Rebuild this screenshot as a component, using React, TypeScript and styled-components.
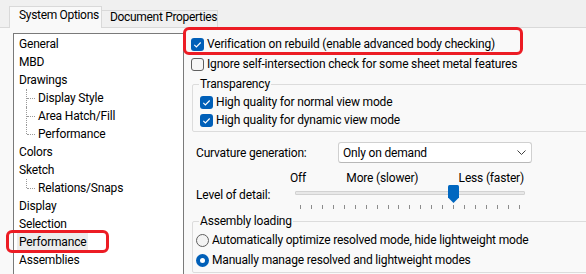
import React from "react";
import styled, { createGlobalStyle, css } from "styled-components";

const GlobalStyle = createGlobalStyle`
  html, body { margin: 0; padding: 0; background: #f0f0f0; overflow: hidden; }
  body {
    font-family: Roboto, "Noto Sans", Arial, sans-serif;
    font-size: 12px;
    letter-spacing: -0.18px;
    color: #000;
  }
  *, *::before, *::after { box-sizing: border-box; }
`;

const Window = styled.div`
  width: 586px;
  height: 274px;
  overflow: hidden;
  display: flex;
  flex-direction: column;
  padding-top: 6px;
`;

const TabStrip = styled.div`
  display: flex;
  align-items: flex-end;
  height: 21px;
  padding-left: 9px;
  position: relative;
  z-index: 1;
  flex: none;
`;

const Tab = styled.div<{ $active?: boolean }>`
  border: 1px solid #d9d9d9;
  border-bottom: none;
  line-height: 12px;
  white-space: nowrap;
  letter-spacing: -0.32px;
  ${(p) =>
    p.$active
      ? css`
          width: 93px;
          height: 22px;
          margin-bottom: -1px;
          padding: 2px 0 0 9px;
          background: #f9f9f9;
          position: relative;
          z-index: 2;
        `
      : css`
          width: 117px;
          height: 17px;
          margin-left: -1px;
          padding: 0 0 0 8px;
          background: #f0f0f0;
        `}
`;

const Panel = styled.div`
  flex: 1;
  display: flex;
  align-items: flex-start;
  width: 630px;
  border-top: 1px solid #d9d9d9;
  background: #f9f9f9;
  padding: 5px 0 0 13px;
`;

const Tree = styled.div`
  flex: none;
  width: 171px;
  height: 260px;
  border: 1px solid #7a7a7a;
  background: #fff;
  padding-top: 1px;
`;

const TreeRow = styled.div<{ $level: number; $last?: boolean }>`
  position: relative;
  height: 18px;
  padding-left: ${(p) => (p.$level === 0 ? 3 : 22)}px;
  ${(p) =>
    p.$level > 0 &&
    css`
      &::before {
        content: "";
        position: absolute;
        left: 12px;
        top: 0;
        bottom: ${p.$last ? "50%" : "0"};
        border-left: 1px dotted #9a9a9a;
      }
      &::after {
        content: "";
        position: absolute;
        left: 13px;
        top: 50%;
        width: 8px;
        border-top: 1px dotted #9a9a9a;
      }
    `}
`;

const TreeLabel = styled.span<{ $selected?: boolean; $marked?: boolean }>`
  display: inline-block;
  position: relative;
  height: 18px;
  line-height: 18px;
  padding: 0 2px;
  white-space: nowrap;
  background: ${(p) => (p.$selected ? "#ececec" : "transparent")};
  ${(p) =>
    p.$marked &&
    css`
      &::after {
        content: "";
        position: absolute;
        left: -11px;
        right: -21px;
        top: -3px;
        bottom: -2px;
        border: 3px solid #ec1c24;
        border-radius: 6px;
        pointer-events: none;
      }
    `}
`;

const Options = styled.div`
  flex: 1;
  min-width: 0;
  display: flex;
  flex-direction: column;
  padding-top: 1px;
`;

const Highlight = styled.div`
  position: relative;
  &::after {
    content: "";
    position: absolute;
    left: -1px;
    top: -7px;
    width: 340px;
    height: 28px;
    border: 3px solid #ec1c24;
    border-radius: 6px;
    pointer-events: none;
  }
`;

const CheckRow = styled.label<{ $indent: number; $height: number }>`
  display: flex;
  align-items: center;
  gap: 3px;
  height: ${(p) => p.$height}px;
  line-height: ${(p) => p.$height}px;
  padding-left: ${(p) => Math.max(p.$indent, 0)}px;
  margin-left: ${(p) => Math.min(p.$indent, 0)}px;
  white-space: nowrap;
`;

const Box = styled.span<{ $checked?: boolean }>`
  flex: none;
  width: 13px;
  height: 13px;
  border-radius: 3px;
  display: flex;
  align-items: center;
  justify-content: center;
  ${(p) =>
    p.$checked
      ? css`
          background: #005fb8;
        `
      : css`
          border: 1px solid #5f5f5f;
          background: #f6f6f6;
        `}
`;

const RadioDot = styled.span<{ $checked?: boolean }>`
  flex: none;
  width: 13px;
  height: 13px;
  border-radius: 50%;
  display: flex;
  align-items: center;
  justify-content: center;
  ${(p) =>
    p.$checked
      ? css`
          background: #005fb8;
          &::after {
            content: "";
            width: 5px;
            height: 5px;
            border-radius: 50%;
            background: #fff;
          }
        `
      : css`
          border: 1px solid #5f5f5f;
          background: #f3f3f3;
        `}
`;

const Group = styled.fieldset<{ $top: number }>`
  margin: ${(p) => p.$top}px -40px 0 8px;
  padding: 1px 0 2px 6px;
  border: 1px solid #dcdcdc;
  border-radius: 2px;
  min-width: 0;
`;

const Legend = styled.legend`
  padding: 0 1px;
  line-height: 16px;
  white-space: nowrap;
`;

const FieldRow = styled.div`
  display: flex;
  align-items: center;
  margin-top: 10px;
  padding-left: 12px;
  height: 21px;
`;

const FieldLabel = styled.span<{ $width: number; $pad?: number }>`
  flex: none;
  width: ${(p) => p.$width}px;
  line-height: 16px;
  padding-top: ${(p) => p.$pad ?? 0}px;
  white-space: nowrap;
`;

const Select = styled.div`
  width: 194px;
  height: 21px;
  background: #fff;
  border: 1px solid #d0d0d0;
  border-bottom-color: #b8b8b8;
  border-radius: 3px;
  display: flex;
  align-items: center;
  justify-content: space-between;
  padding: 0 5px 0 4px;
  line-height: 16px;
`;

const ScaleLabels = styled.div`
  display: flex;
  margin-top: 7px;
  width: 340px;
  padding-left: 106px;
  line-height: 16px;
  white-space: nowrap;
`;

const ScaleText = styled.span<{ $push?: boolean }>`
  margin-left: ${(p) => (p.$push ? "auto" : "0")};
  & + & {
    margin-left: ${(p) => (p.$push ? "auto" : "11px")};
  }
`;

const LevelRow = styled.div`
  display: flex;
  align-items: flex-start;
  margin-top: -1px;
  padding-left: 12px;
`;

const Slider = styled.div`
  width: 230px;
  position: relative;
`;

const TrackArea = styled.div`
  height: 18px;
  padding-top: 6px;
`;

const Track = styled.div`
  height: 4px;
  border: 1px solid #d2d2d2;
  background: #e8e8e8;
  border-radius: 1px;
`;

const Thumb = styled.svg`
  position: absolute;
  top: 0;
  display: block;
`;

const Ticks = styled.div`
  display: flex;
  justify-content: space-between;
  margin-top: 2px;
  padding: 0 5px;
  width: 230px;
  height: 4px;
`;

const Tick = styled.span`
  width: 1px;
  height: 4px;
  background: #8c8c8c;
`;

const CheckMark = () => (
  <svg width="13" height="13" viewBox="0 0 13 13">
    <path d="M3.3 6.9 L5.4 9 L9.7 4.5" fill="none" stroke="#fff" strokeWidth="1.1" />
  </svg>
);

const Check = ({ checked, indent, height, children }: { checked?: boolean; indent: number; height: number; children: React.ReactNode }) => (
  <CheckRow $indent={indent} $height={height}>
    <Box $checked={checked}>{checked && <CheckMark />}</Box>
    <span>{children}</span>
  </CheckRow>
);

const Radio = ({ checked, children }: { checked?: boolean; children: React.ReactNode }) => (
  <CheckRow $indent={-3} $height={20}>
    <RadioDot $checked={checked} />
    <span>{children}</span>
  </CheckRow>
);

type Node = { label: string; level: number; last?: boolean; selected?: boolean; marked?: boolean };

const nodes: Node[] = [
  { label: "General", level: 0 },
  { label: "MBD", level: 0 },
  { label: "Drawings", level: 0 },
  { label: "Display Style", level: 1 },
  { label: "Area Hatch/Fill", level: 1 },
  { label: "Performance", level: 1, last: true },
  { label: "Colors", level: 0 },
  { label: "Sketch", level: 0 },
  { label: "Relations/Snaps", level: 1, last: true },
  { label: "Display", level: 0 },
  { label: "Selection", level: 0 },
  { label: "Performance", level: 0, selected: true, marked: true },
  { label: "Assemblies", level: 0 },
];

const TICKS = 21;
const VALUE = 14;

export default function App() {
  const thumbLeft = 5 + (VALUE * 219) / (TICKS - 1) - 5;
  return (
    <>
      <GlobalStyle />
      <Window>
        <TabStrip>
          <Tab $active>System Options</Tab>
          <Tab>Document Properties</Tab>
        </TabStrip>
        <Panel>
          <Tree>
            {nodes.map((n, i) => (
              <TreeRow key={i} $level={n.level} $last={n.last}>
                <TreeLabel $selected={n.selected} $marked={n.marked}>
                  {n.label}
                </TreeLabel>
              </TreeRow>
            ))}
          </Tree>
          <Options>
            <Highlight>
              <Check checked indent={7} height={20}>
                Verification on rebuild (enable advanced body checking)
              </Check>
            </Highlight>
            <Check indent={7} height={20}>
              Ignore self-intersection check for some sheet metal features
            </Check>
            <Group $top={2}>
              <Legend>Transparency</Legend>
              <Check checked indent={1} height={18}>
                High quality for normal view mode
              </Check>
              <Check checked indent={1} height={18}>
                High quality for dynamic view mode
              </Check>
            </Group>
            <FieldRow>
              <FieldLabel $width={142}>Curvature generation:</FieldLabel>
              <Select>
                <span>Only on demand</span>
                <svg width="9" height="5" viewBox="0 0 9 5">
                  <path d="M0.5 0.5 L4.5 4.5 L8.5 0.5" fill="none" stroke="#404040" strokeWidth="1" />
                </svg>
              </Select>
            </FieldRow>
            <ScaleLabels>
              <ScaleText>Off</ScaleText>
              <ScaleText>More (slower)</ScaleText>
              <ScaleText $push>Less (faster)</ScaleText>
            </ScaleLabels>
            <LevelRow>
              <FieldLabel $width={99} $pad={2}>
                Level of detail:
              </FieldLabel>
              <Slider>
                <TrackArea>
                  <Track />
                </TrackArea>
                <Thumb width="11" height="18" viewBox="0 0 11 18" style={{ left: thumbLeft }}>
                  <path d="M1.5 0 H9.5 Q11 0 11 1.5 V12.5 L5.5 18 L0 12.5 V1.5 Q0 0 1.5 0 Z" fill="#0067c0" />
                </Thumb>
                <Ticks>
                  {Array.from({ length: TICKS }, (_, i) => (
                    <Tick key={i} />
                  ))}
                </Ticks>
              </Slider>
            </LevelRow>
            <Group $top={4}>
              <Legend>Assembly loading</Legend>
              <Radio>Automatically optimize resolved mode, hide lightweight mode</Radio>
              <Radio checked>Manually manage resolved and lightweight modes</Radio>
            </Group>
          </Options>
        </Panel>
      </Window>
    </>
  );
}
